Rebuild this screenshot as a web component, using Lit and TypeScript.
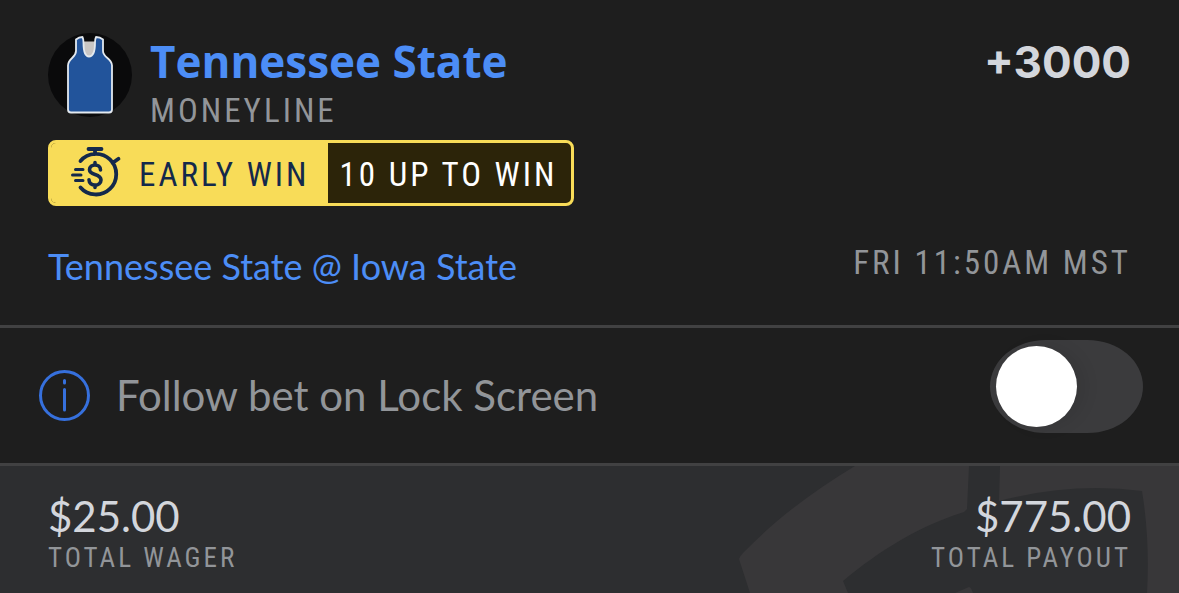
import { LitElement, html, css } from "lit";
import { customElement, state } from "lit/decorators.js";

@customElement("app-root")
export class AppRoot extends LitElement {
  static styles = css`
    :host {
      display: block;
      min-height: 100vh;
      background: #1e1e1e;
      color: #d3d6dc;
      font-family: Lato, "Open Sans", sans-serif;
    }
    * { box-sizing: border-box; }
    .card { display: flex; flex-direction: column; min-height: 100vh; }
    .caps {
      font-family: "Roboto Condensed", "Liberation Sans Narrow", "Open Sans Condensed", Roboto, sans-serif;
      font-size: 33px;
      line-height: 42px;
      font-weight: 400;
      letter-spacing: 3px;
      color: #929599;
      margin: 0;
      white-space: nowrap;
    }
    .selection { padding: 32px 48px 35px; border-bottom: 3px solid #414142; }
    .top { display: flex; align-items: flex-start; gap: 18px; }
    .avatar { width: 84px; height: 86px; flex: none; }
    .pick { flex: 1; height: 96px; }
    .name, .odds {
      margin: 0;
      font-family: "Open Sans", Lato, sans-serif;
      font-size: 44px;
      line-height: 58px;
      font-weight: 700;
    }
    .name { color: #4c8df6; }
    .odds { font-family: Inter, "Open Sans", sans-serif; line-height: 60px; }
    .promo {
      display: flex;
      width: fit-content;
      height: 66px;
      margin-top: 12px;
      border: 3px solid #f8dc58;
      border-radius: 8px;
      overflow: hidden;
      background: #2c2409;
    }
    .promo-name { display: flex; align-items: flex-start; gap: 16px; padding: 0 18px 0 20px; background: #f8dc58; }
    .promo .caps { line-height: 64px; }
    .promo .dark { color: #14294b; }
    .promo .light { color: #fff; padding: 0 14px 0 12px; }
    .stopwatch { width: 52px; height: 52px; margin-top: 3px; }
    .event { display: flex; justify-content: space-between; margin-top: 36px; }
    .match { font-size: 36px; line-height: 48px; color: #4c8df6; text-decoration: none; }
    .follow {
      display: flex;
      align-items: flex-start;
      justify-content: space-between;
      padding: 12px 36px 0 39px;
      min-height: 138px;
      border-bottom: 3px solid #414142;
    }
    .follow-label { display: flex; align-items: center; gap: 26px; margin-top: 26px; font-size: 42px; line-height: 58px; color: #929599; }
    .info { width: 51px; height: 51px; padding: 0; border: 0; background: none; display: block; }
    .info svg { display: block; }
    .switch {
      appearance: none;
      width: 153px;
      height: 93px;
      margin: 0;
      padding: 6px;
      border-radius: 56px / 47px;
      background: #3b3b3d;
      cursor: pointer;
    }
    .switch::before {
      content: "";
      display: block;
      width: 81px;
      height: 81px;
      border-radius: 50%;
      background: #fff;
      box-shadow: 8px 0 16px rgba(0, 0, 0, 0.08);
    }
    .switch:checked { background: #2f6fe0; }
    .switch:checked::before { margin-left: auto; }
    .totals {
      position: relative;
      flex: 1;
      display: flex;
      justify-content: space-between;
      padding: 25px 48px 16px;
      background: #2d2e30;
      overflow: hidden;
    }
    .watermark { position: absolute; top: 0; right: 0; width: 440px; height: 127px; }
    .total { position: relative; }
    .end { text-align: right; }
    .amount { margin: 0; font-size: 42px; line-height: 50px; }
    .total .caps { font-size: 27px; line-height: 34px; }
  `;

  @state() private following = false;

  private toggleFollow(e: Event) {
    this.following = (e.target as HTMLInputElement).checked;
  }

  render() {
    return html`
      <main class="card">
        <section class="selection">
          <div class="top">
            <svg class="avatar" viewBox="48 32 84 86" aria-hidden="true">
              <circle cx="90" cy="75" r="42" fill="#0a0a0b" />
              <path d="M83 41.500H96V52Q94 58 89.500 58Q84 58 83 50Z" fill="#c9c6c4" />
              <path d="M76 39.500Q79 37 82.500 37Q83.500 39 83.500 43C83.500 52 85 56.500 89 56.500C93.500 56.500 95 52 95 43Q95 39 96 37Q100 37 103 39.500V51C103 58 112 58 112 65.500V109.500Q112 112.500 109 112.500H71Q68 112.500 68 109.500V65.500C68 58 76 58 76 51Z" fill="#22549b" stroke="#e3e9ef" stroke-width="1.800" stroke-linejoin="round" />
            </svg>
            <div class="pick">
              <h1 class="name">Tennessee State</h1>
              <p class="caps">MONEYLINE</p>
            </div>
            <div class="odds">+3000</div>
          </div>
          <div class="promo">
            <div class="promo-name">
              <svg class="stopwatch" viewBox="72 146 52 52" fill="none" stroke="#14294b" stroke-width="3.800" stroke-linecap="round" stroke-linejoin="round" aria-hidden="true">
                <path d="M89.500 149H102.500M96 149V154M113.500 163L119.500 158.800M81.500 161A20.300 20.300 0 1 1 81.500 187.400" />
                <path d="M76.500 169.500H84M73.500 174.900H82M76.500 180.400H84" stroke-width="3" />
                <path d="M101.500 170C101.500 163.300 90.500 163.300 90.500 169.800C90.500 176 102 173 102 180C102 186.800 90 186.800 90 179.800M96 162.500V165M96 185V187.500" stroke-width="3.600" />
              </svg>
              <span class="caps dark">EARLY WIN</span>
            </div>
            <span class="caps light">10 UP TO WIN</span>
          </div>
          <div class="event">
            <a class="match" href="#event">Tennessee State @ Iowa State</a>
            <p class="caps">FRI 11:50AM MST</p>
          </div>
        </section>

        <section class="follow">
          <div class="follow-label">
            <button class="info" type="button" aria-label="About following bets">
              <svg width="51" height="51" viewBox="0 0 51 51" fill="none" stroke="#3670dd" stroke-width="3" stroke-linecap="round">
                <circle cx="25.500" cy="25.500" r="24" />
                <path d="M25.500 10.500V13M25.500 19.500V40" />
              </svg>
            </button>
            <label for="follow">Follow bet on Lock Screen</label>
          </div>
          <input id="follow" class="switch" type="checkbox" role="switch" .checked=${this.following} @change=${this.toggleFollow} />
        </section>

        <section class="totals">
          <svg class="watermark" viewBox="739 466 440 127" fill="#383739" aria-hidden="true">
            <path d="M855 466H969L967 509Q965 512 961 513C920 526 880 550 843 581L848 593H750L739 559Q740 556 743 553C778 517 815 490 855 466Z" />
            <path d="M1000 466H1179V593H1147Q1150 540 1142 491Q1072 482 999 501Z" />
            <path d="M955 593L969 587Q971 587 973 593Z" />
          </svg>
          <div class="total">
            <p class="amount">$25.00</p>
            <p class="caps">TOTAL WAGER</p>
          </div>
          <div class="total end">
            <p class="amount">$775.00</p>
            <p class="caps">TOTAL PAYOUT</p>
          </div>
        </section>
      </main>
    `;
  }
}
